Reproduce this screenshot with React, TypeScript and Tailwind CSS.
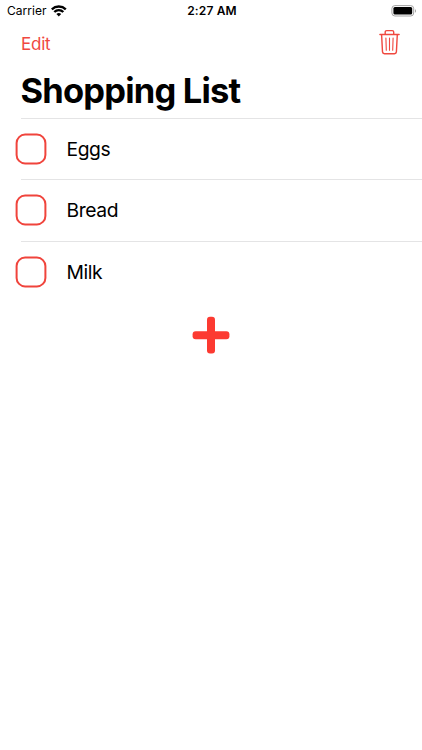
const items = ['Eggs', 'Bread', 'Milk']

function WifiIcon() {
  return (
    <svg viewBox="0 0 16 12" className="ml-[5px] h-3 w-4" fill="none" stroke="black" strokeWidth="2.4">
      <path d="M.8 4.3a10.2 10.2 0 0 1 14 0" />
      <path d="M3.3 7a6.3 6.3 0 0 1 9 0" />
      <path d="M5.4 9.1a3.4 3.4 0 0 1 4.8 0l-2.4 2.4Z" fill="black" stroke="none" />
    </svg>
  )
}

function BatteryIcon() {
  return (
    <svg viewBox="0 0 26 12" className="h-3 w-[26px]">
      <rect x="0.9" y="0.6" width="21.8" height="10.4" rx="3" fill="white" stroke="#a3a3a3" />
      <rect x="2.4" y="2.1" width="18.8" height="7.4" rx="1.5" fill="black" />
      <path d="M24 4.2v3.4c.7-.3 1-1 1-1.7s-.3-1.4-1-1.7Z" fill="#a3a3a3" />
    </svg>
  )
}

function TrashIcon() {
  return (
    <svg
      viewBox="0 0 22 26"
      className="h-[26px] w-[22px]"
      fill="none"
      stroke="#f0483f"
      strokeWidth="1.4"
      strokeLinecap="round"
      strokeLinejoin="round"
    >
      <path d="M1.9 5.5h19.2" />
      <path d="M7.2 5.4V3.1c0-.9.6-1.5 1.5-1.5h5.5c.9 0 1.5.6 1.5 1.5v2.3" />
      <path d="m3.6 5.6.9 17.3c.1 1.1.7 1.8 1.9 1.8h10.1c1.2 0 1.8-.7 1.9-1.8l.9-17.3" />
      <path d="m7.9 9 .4 12.2M11.5 9v12.2M15.1 9l-.4 12.2" strokeWidth="1.1" />
    </svg>
  )
}

function ListItem({ label }: { label: string }) {
  return (
    <li className="h-[61.3px]">
      <div className="ml-[21px] h-px bg-[#e4e4e5]" />
      <div className="flex h-[60.3px] items-center pl-[15px]">
        <svg viewBox="0 0 32 32" className="size-8 shrink-0" fill="none" stroke="#f0443c" strokeWidth="2">
          <rect x="1.6" y="1.6" width="28.8" height="28.8" rx="8.5" />
        </svg>
        <span className="ml-[19.5px] pt-px text-[19.3px] tracking-[-0.4px]">{label}</span>
      </div>
    </li>
  )
}

export default function App() {
  return (
    <main className="h-[750px] w-[422px] overflow-hidden bg-white font-['Inter',sans-serif] text-black">
      <div className="grid h-[22px] grid-cols-3 items-center pl-[7px] pr-[5px]">
        <div className="flex items-center">
          <span className="text-[12px] tracking-[0.02px]">Carrier</span>
          <WifiIcon />
        </div>
        <span className="text-center text-[12px] font-semibold tracking-[0.15px]">2:27 AM</span>
        <div className="flex justify-end">
          <BatteryIcon />
        </div>
      </div>

      <header className="flex h-[42px] items-center justify-between pl-[21px] pr-[22px]">
        <button className="pt-[3px] text-[17px] tracking-[-0.25px] text-[#f0483f]">Edit</button>
        <button aria-label="Delete" className="pb-[2px]">
          <TrashIcon />
        </button>
      </header>

      <h1 className="flex h-[54px] items-center pl-[20.5px] text-[34.5px] font-bold tracking-[-0.8px]">
        Shopping List
      </h1>

      <ul>
        {items.map((item) => (
          <ListItem key={item} label={item} />
        ))}
      </ul>

      <div className="mt-[14px] flex justify-center">
        <svg viewBox="0 0 38 38" className="size-[38px]" fill="#fc3a31">
          <rect x="15" y="0.8" width="8" height="36.8" rx="3" />
          <rect x="0.6" y="15.2" width="36.8" height="8" rx="3" />
        </svg>
      </div>
    </main>
  )
}
